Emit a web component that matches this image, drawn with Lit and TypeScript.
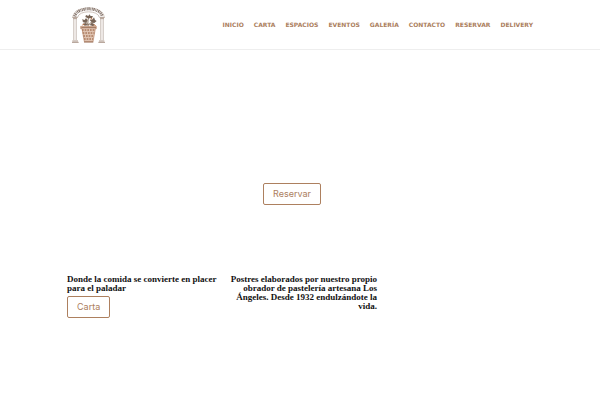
import { LitElement, html, css } from "lit";
import { customElement } from "lit/decorators.js";

const LINKS = ["Inicio", "Carta", "Espacios", "Eventos", "Galería", "Contacto", "Reservar", "Delivery"];

@customElement("site-logo")
class SiteLogo extends LitElement {
  static styles = css`
    :host { display: block; }
    .logo { display: block; width: 33px; height: 36px; }
  `;
  render() {
    return html`
      <svg class="logo" viewBox="18 15 99 108" role="img" aria-label="Logo" fill="none" stroke="#9a8272">
        <!-- arch -->
        <path d="M20 46C21 8 114 8 115 46" stroke="#cbbcb3" stroke-width="1.5" />
        <path d="M35 46C38 24 97 24 100 46" stroke="#b8a89d" stroke-width="2" />
        <path d="M26 43C33 13 103 13 109 43" stroke="#84736a" stroke-width="9" stroke-dasharray="3 2 4 2 2 2" />
        <!-- columns -->
        <path d="M19 46H35M21 50H33M101 46H116M102 50H114" stroke-width="2.5" />
        <path d="M23 51V114M31 51V114M104 51V114M112 51V114" stroke="#b5a79e" stroke-width="2" />
        <path d="M27 51V114M108 51V114" stroke="#e3dad5" stroke-width="3" />
        <path d="M19 117H36M18 121H38M99 117H115M97 121H117" stroke-width="2.5" />
        <!-- plant -->
        <path d="M67 76C66 66 64 60 68 45M67 69C60 58 55 62 50 58M68 69C73 58 82 65 86 57" stroke="#755c45" stroke-width="2.5" />
        <path d="M66 49L58 45 60 39 67 42 70 37 74 42 81 42 77 49ZM61 62L52 60 48 52 56 54 60 48 65 55ZM77 61L71 54 80 52 84 46 87 54 92 57 85 63ZM65 70L56 71 50 65 60 63ZM71 69L77 62 86 67 82 73Z" fill="#776456" stroke="none" />
        <path d="M74 52l5-4M55 66l-6 3M83 68l6 3" stroke="#bd7040" stroke-width="3" />
        <!-- pot -->
        <path d="M44 73H91V80H88L81 119H55L48 80H44Z" fill="#dfc3b1" stroke="#b78365" stroke-width="2" />
        <path d="M48 84H87M50 93H85M52 102H83M54 111H81" stroke="#ab7b5e" stroke-width="4" stroke-dasharray="5 3" />
        <path d="M46 77H90M54 120H82" stroke="#9a7058" stroke-width="3" />
      </svg>`;
  }
}

@customElement("app-root")
class AppRoot extends LitElement {
  static styles = css`
    :host {
      display: block;
      background: #fff;
      color: #111;
      font-family: Inter, "Open Sans", sans-serif;
    }
    .header {
      display: flex;
      align-items: center;
      justify-content: space-between;
      height: 49px;
      padding: 0 67px 0 72px;
      border-bottom: 1px solid #eee;
    }
    .nav { display: flex; gap: 10px; }
    .link {
      color: #ab7e5d;
      font-family: "DejaVu Sans", sans-serif;
      font-size: 6px;
      line-height: 10px;
      font-weight: 700;
      text-transform: uppercase;
      text-decoration: none;
    }
    .hero {
      display: flex;
      justify-content: center;
      padding: 133px 16px 70px 0;
    }
    .button {
      box-sizing: border-box;
      height: 22px;
      padding: 0 9px;
      border: 1px solid #ad805f;
      border-radius: 2px;
      background: transparent;
      color: #ab7e5d;
      font: 400 9px/20px Inter, "Open Sans", sans-serif;
    }
    .columns {
      display: grid;
      grid-template-columns: repeat(3, 1fr);
      gap: 2px;
      padding: 0 67px;
    }
    .text {
      margin: 0;
      font: 700 9px/9px "Liberation Serif", serif;
      white-space: nowrap;
    }
    .right { text-align: right; }
    .carta { margin-top: 3px; }
  `;
  render() {
    return html`
      <header class="header">
        <site-logo></site-logo>
        <nav class="nav">${LINKS.map((l) => html`<a class="link" href="#">${l}</a>`)}</nav>
      </header>
      <main>
        <section class="hero"><button class="button">Reservar</button></section>
        <section class="columns">
          <div>
            <p class="text">Donde la comida se convierte en placer<br />para el paladar</p>
            <button class="button carta">Carta</button>
          </div>
          <p class="text right">Postres elaborados por nuestro propio<br />obrador de pastelería artesana Los<br />Ángeles. Desde 1932 endulzándote la<br />vida.</p>
        </section>
      </main>`;
  }
}
